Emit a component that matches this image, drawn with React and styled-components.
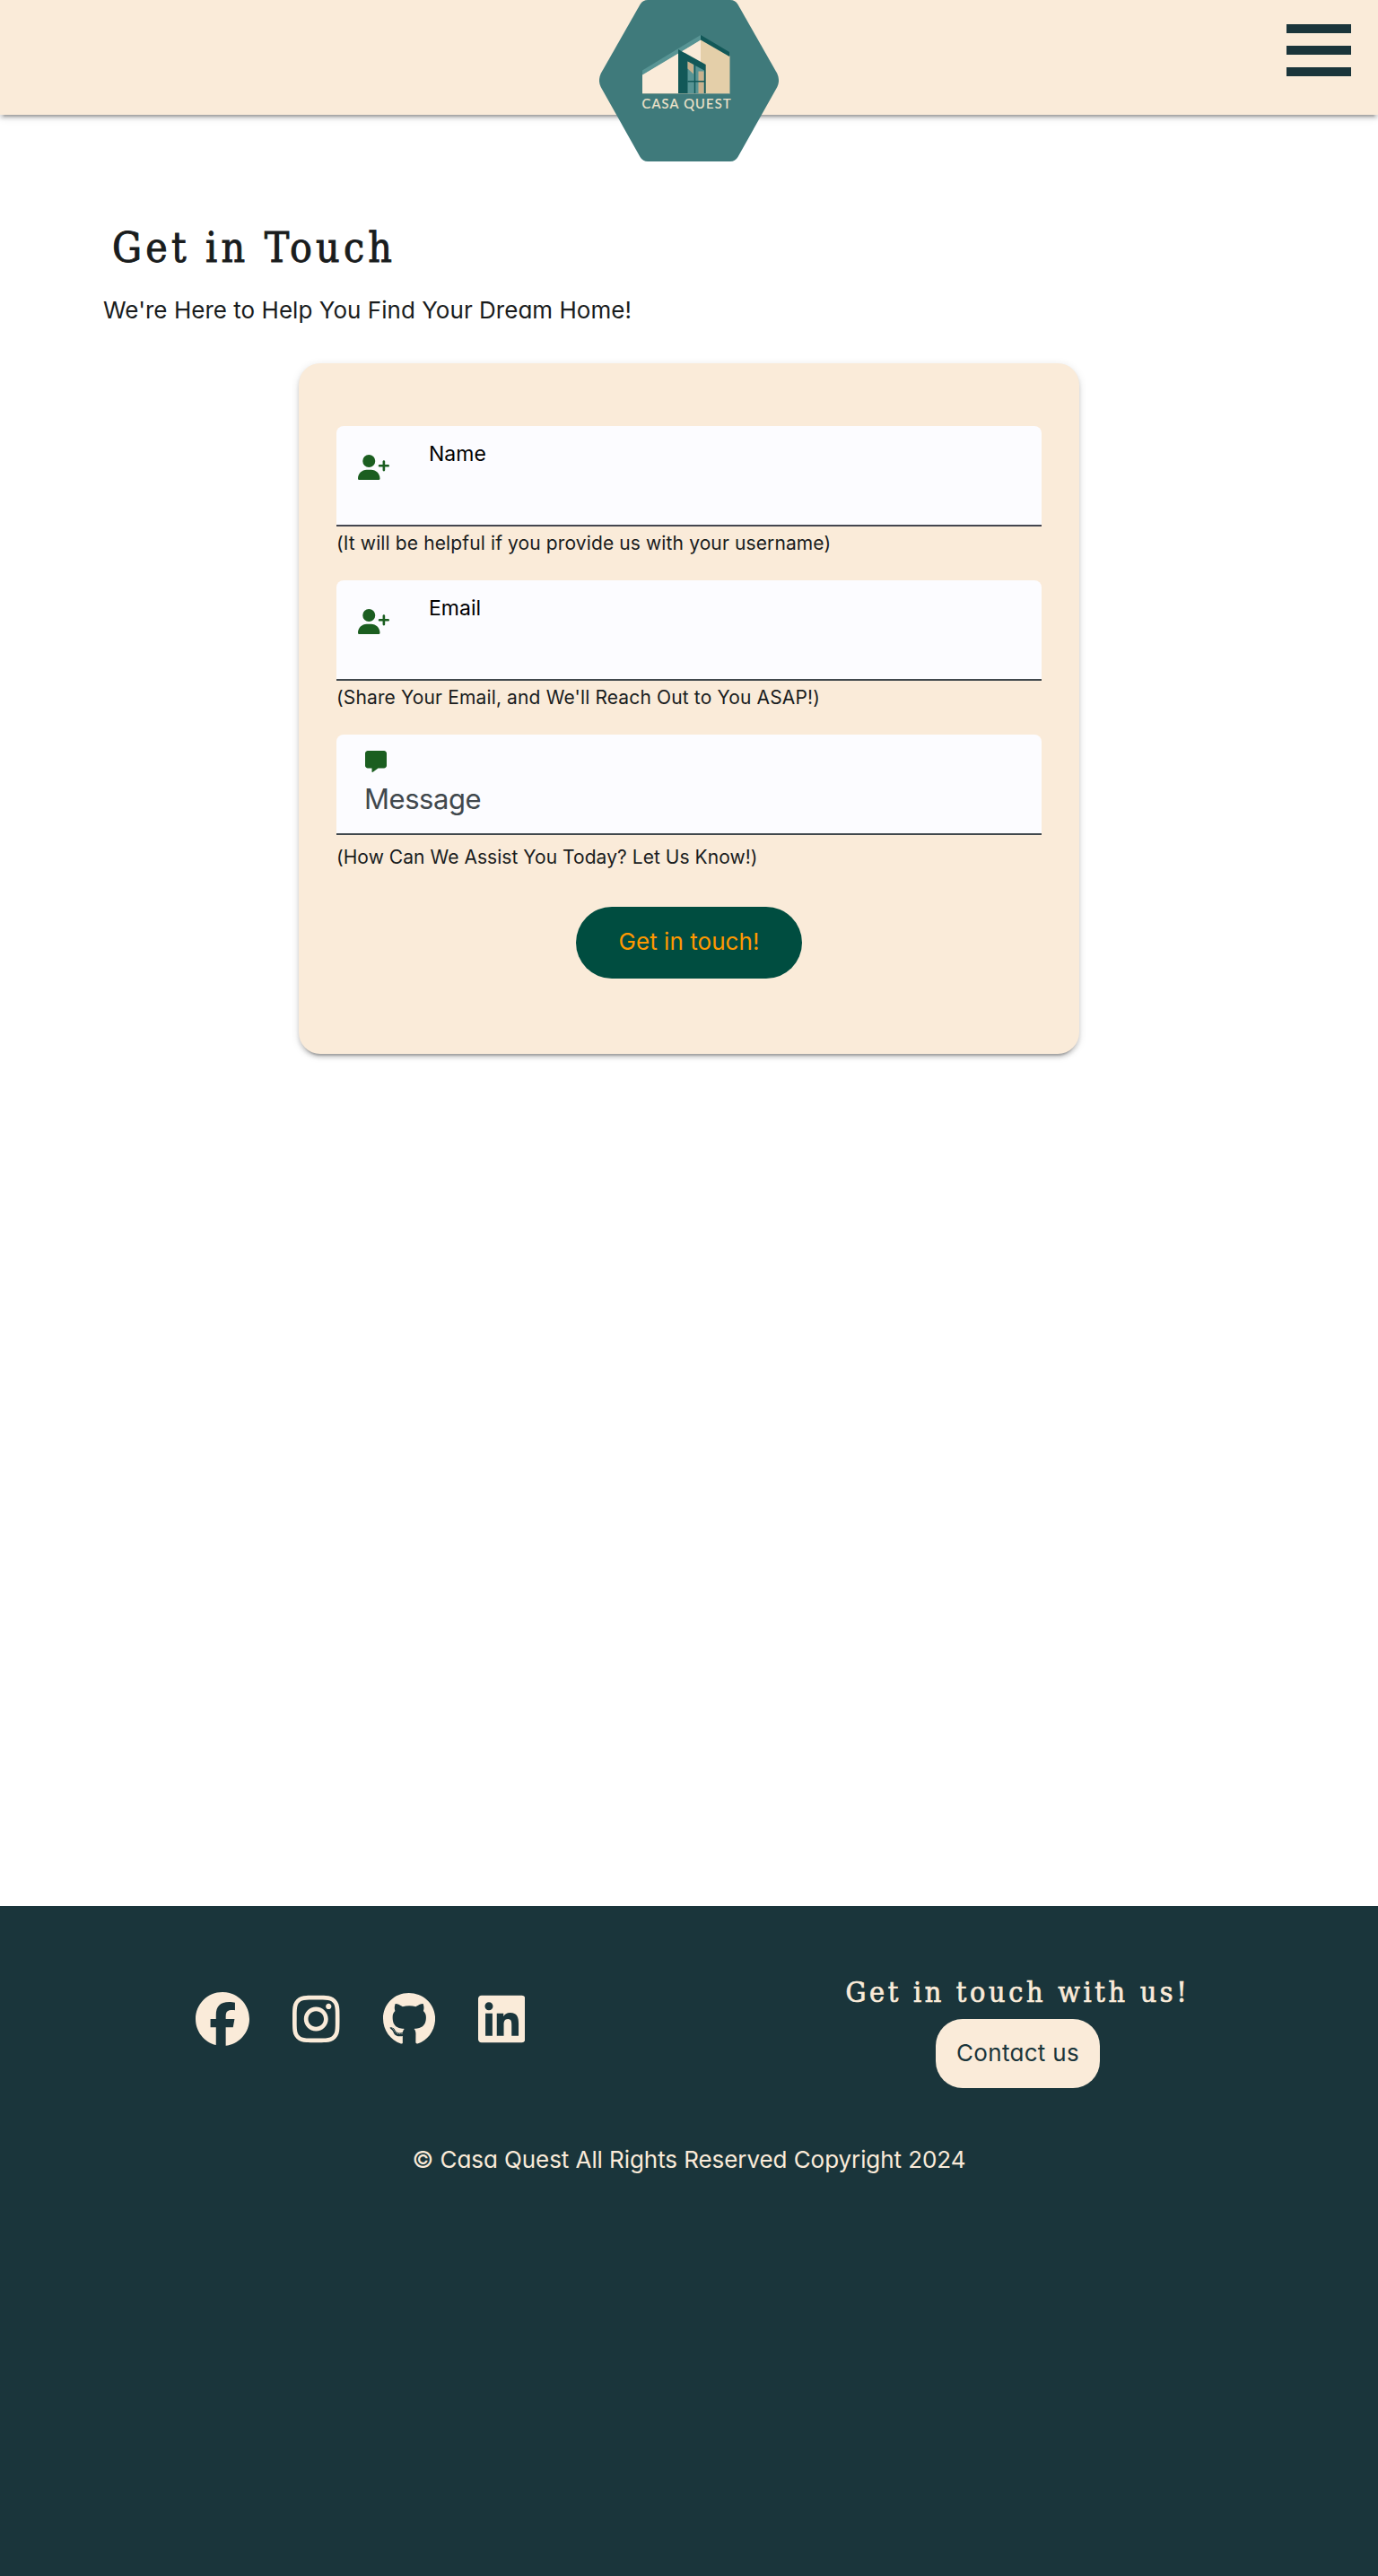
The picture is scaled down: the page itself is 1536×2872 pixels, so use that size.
import React from "react";
import styled, { createGlobalStyle } from "styled-components";
import { FaFacebook, FaInstagram, FaGithub, FaLinkedin, FaUserPlus, FaMessage } from "react-icons/fa6";

const cream = "#faebd9";
const ink = "#1a353b";
const sans = `Inter, "Liberation Sans", sans-serif`;
const slab = `"DejaVu Serif Condensed", "DejaVu Serif", serif`;
const elevation = `0 6px 2px -4px rgba(0,0,0,.2), 0 4px 4px 0 rgba(0,0,0,.14), 0 2px 10px 0 rgba(0,0,0,.12)`;

const Global = createGlobalStyle`
  * { box-sizing: border-box; }
  body { margin: 0; background: #fff; font-family: ${sans}; color: #191c1d; }
  h1, h2, p { margin: 0; font-weight: 400; }
`;

const Page = styled.div`
  display: flex;
  flex-direction: column;
  height: 2872px;
`;

const Header = styled.header`
  position: relative;
  display: flex;
  flex-shrink: 0;
  justify-content: flex-end;
  align-items: flex-start;
  height: 128px;
  padding: 27px 30px 0;
  background: ${cream};
  box-shadow: ${elevation};
`;

const LogoMark = styled.svg`
  position: absolute;
  left: 50%;
  top: 0;
  width: 200px;
  height: 180px;
  transform: translateX(-50%);
`;

const Menu = styled.button`
  display: flex;
  flex-direction: column;
  gap: 14px;
  padding: 0;
  border: 0;
  background: none;
`;

const Bar = styled.span`
  width: 72px;
  height: 10px;
  background: ${ink};
`;

const Main = styled.main`
  flex-shrink: 0;
  height: 1997px;
  padding-top: 116px;
`;

const Title = styled.h1`
  padding-left: 125px;
  font: 400 46px/64px ${slab};
  font-stretch: condensed;
  letter-spacing: 4.2px;
  -webkit-text-stroke: 0.9px currentColor;
`;

const Tagline = styled.p`
  margin-top: 20px;
  padding-left: 115px;
  font: 400 26px/36px ${sans};
  font-feature-settings: "cv11";
  letter-spacing: 0.03px;
`;

const Card = styled.form`
  display: flex;
  flex-direction: column;
  width: 870px;
  height: 770px;
  margin: 41px auto 0;
  padding: 70px 42px 0;
  border-radius: 24px;
  background: ${cream};
  box-shadow: ${elevation};
`;

const Field = styled.div`
  display: flex;
  flex-direction: ${(p) => (p.$stacked ? "column" : "row")};
  flex-shrink: 0;
  align-items: flex-start;
  gap: ${(p) => (p.$stacked ? "10px" : "44px")};
  height: 112px;
  padding: ${(p) => (p.$stacked ? "18px 32px 0" : "16px 24px 0")};
  border-radius: 8px 8px 0 0;
  border-bottom: 2px solid ${(p) => p.$line};
  background: #fcfcff;
`;

const FieldIcon = styled.span`
  display: flex;
  flex-shrink: 0;
  width: ${(p) => p.$w}px;
  height: ${(p) => p.$h}px;
  margin-top: ${(p) => p.$drop}px;
  color: #1b5e20;

  svg {
    width: 100%;
    height: 100%;
  }
`;

const Label = styled.label`
  font: 400 23px/30px ${sans};
  color: #000;
`;

const Placeholder = styled.label`
  margin-left: -1px;
  font: 400 31px/40px ${sans};
  letter-spacing: -0.45px;
  color: #41484d;
`;

const Hint = styled.p`
  margin: ${(p) => p.$top}px 0 ${(p) => p.$bottom}px;
  font: 400 21px/30px ${sans};
  letter-spacing: ${(p) => p.$track}px;
`;

const Submit = styled.button`
  align-self: center;
  width: 252px;
  height: 80px;
  padding: 0 0 2px;
  border: 0;
  border-radius: 40px;
  background: #004d40;
  color: #ff9800;
  font: 400 26px/36px ${sans};
  font-feature-settings: "cv11";
  letter-spacing: 0.05px;
`;

const Footer = styled.footer`
  flex: 1;
  padding-top: 76px;
  background: ${ink};
  color: ${cream};
`;

const FooterRow = styled.div`
  display: flex;
  justify-content: space-between;
  padding: 0 209px 0 218px;
`;

const Social = styled.nav`
  display: flex;
  gap: 48px;
  margin-top: 20px;
`;

const SocialLink = styled.a`
  display: flex;
  width: ${(p) => p.$w}px;
  height: 60px;

  svg {
    width: 100%;
    height: 100%;
  }
`;

const Contact = styled.div`
  display: flex;
  flex-direction: column;
  align-items: center;
  width: 385px;
`;

const ContactTitle = styled.h2`
  white-space: nowrap;
  font: 400 32px/40px ${slab};
  font-stretch: condensed;
  letter-spacing: 3.68px;
  -webkit-text-stroke: 0.7px currentColor;
`;

const ContactButton = styled.button`
  width: 183px;
  height: 77px;
  margin-top: 10px;
  padding: 0 0 1px;
  border: 0;
  border-radius: 30px;
  background: ${cream};
  color: ${ink};
  font: 400 26px/36px ${sans};
  font-feature-settings: "cv11";
  letter-spacing: 0.3px;
`;

const Copyright = styled.p`
  margin-top: 62px;
  text-align: center;
  font: 400 26px/36px ${sans};
  font-feature-settings: "cv11";
  letter-spacing: -0.07px;
`;

function Logo() {
  return (
    <LogoMark viewBox="668 0 200 180" role="img" aria-label="Casa Quest">
      <path
        fill="#3f7a7b"
        d="M722 0H814Q819.5 0 822.5 5L866.3 82Q869.8 90 866.3 97L822.5 175Q819.5 180 814 180H722Q716.5 180 713.5 175L669.7 97Q666.2 90 669.7 82L713.5 5Q716.5 0 722 0Z"
      />
      <path fill="#faebd9" d="M716 83L781 44V104.5H716Z" />
      <path fill="#e4cfa9" d="M781 43.5L813.5 62.5V104.5H781Z" />
      <path fill="#589494" d="M716 78.5L781 39V44.5L716 83.5Z" />
      <path fill="#125858" d="M781 39L813 58V63L781 44.5Z" />
      <path fill="#125858" d="M756 55L786.7 72V104.5H756Z" />
      <path fill="#589494" d="M766.5 68.5L785 78.5V104.3H766.5Z" />
      <path fill="#c9b18d" d="M766.5 68.5L773 72V82.500L766.5 76.5ZM778.5 79.5H784.5V104.3H778.5Z" />
      <path stroke="#125858" strokeWidth="1.5" d="M774.5 72V104.5M766.5 90.800H785.5" />
      <path stroke="#7d9a90" strokeWidth="0.9" d="M716 104.5H813.5" />
      <text
        x="715.5"
        y="120.5"
        textLength="99"
        fill="#eee3cb"
        stroke="#eee3cb"
        strokeWidth="0.2"
        fontFamily="Lato, sans-serif"
        fontSize="14.6"
      >
        CASA QUEST
      </text>
    </LogoMark>
  );
}

export default function App() {
  return (
    <Page>
      <Global />
      <Header>
        <Logo />
        <Menu aria-label="Menu">
          <Bar />
          <Bar />
          <Bar />
        </Menu>
      </Header>
      <Main>
        <Title>Get in Touch</Title>
        <Tagline>We're Here to Help You Find Your Dream Home!</Tagline>
        <Card>
          <Field $line="#44464f">
            <FieldIcon $w={35} $h={28} $drop={15.5}>
              <FaUserPlus />
            </FieldIcon>
            <Label>Name</Label>
          </Field>
          <Hint $top={4} $bottom={26} $track={0.12}>
            (It will be helpful if you provide us with your username)
          </Hint>
          <Field $line="#41484d">
            <FieldIcon $w={35} $h={28} $drop={15.5}>
              <FaUserPlus />
            </FieldIcon>
            <Label>Email</Label>
          </Field>
          <Hint $top={4} $bottom={26} $track={0.14}>
            (Share Your Email, and We'll Reach Out to You ASAP!)
          </Hint>
          <Field $stacked $line="#41484d">
            <FieldIcon $w={24} $h={24} $drop={0}>
              <FaMessage />
            </FieldIcon>
            <Placeholder>Message</Placeholder>
          </Field>
          <Hint $top={10} $bottom={40} $track={0.05}>
            (How Can We Assist You Today? Let Us Know!)
          </Hint>
          <Submit type="button">Get in touch!</Submit>
        </Card>
      </Main>
      <Footer>
        <FooterRow>
          <Social>
            <SocialLink $w={60}>
              <FaFacebook />
            </SocialLink>
            <SocialLink $w={52.5}>
              <FaInstagram />
            </SocialLink>
            <SocialLink $w={58.1}>
              <FaGithub />
            </SocialLink>
            <SocialLink $w={52.5}>
              <FaLinkedin />
            </SocialLink>
          </Social>
          <Contact>
            <ContactTitle>Get in touch with us!</ContactTitle>
            <ContactButton>Contact us</ContactButton>
          </Contact>
        </FooterRow>
        <Copyright>© Casa Quest All Rights Reserved Copyright 2024</Copyright>
      </Footer>
    </Page>
  );
}
